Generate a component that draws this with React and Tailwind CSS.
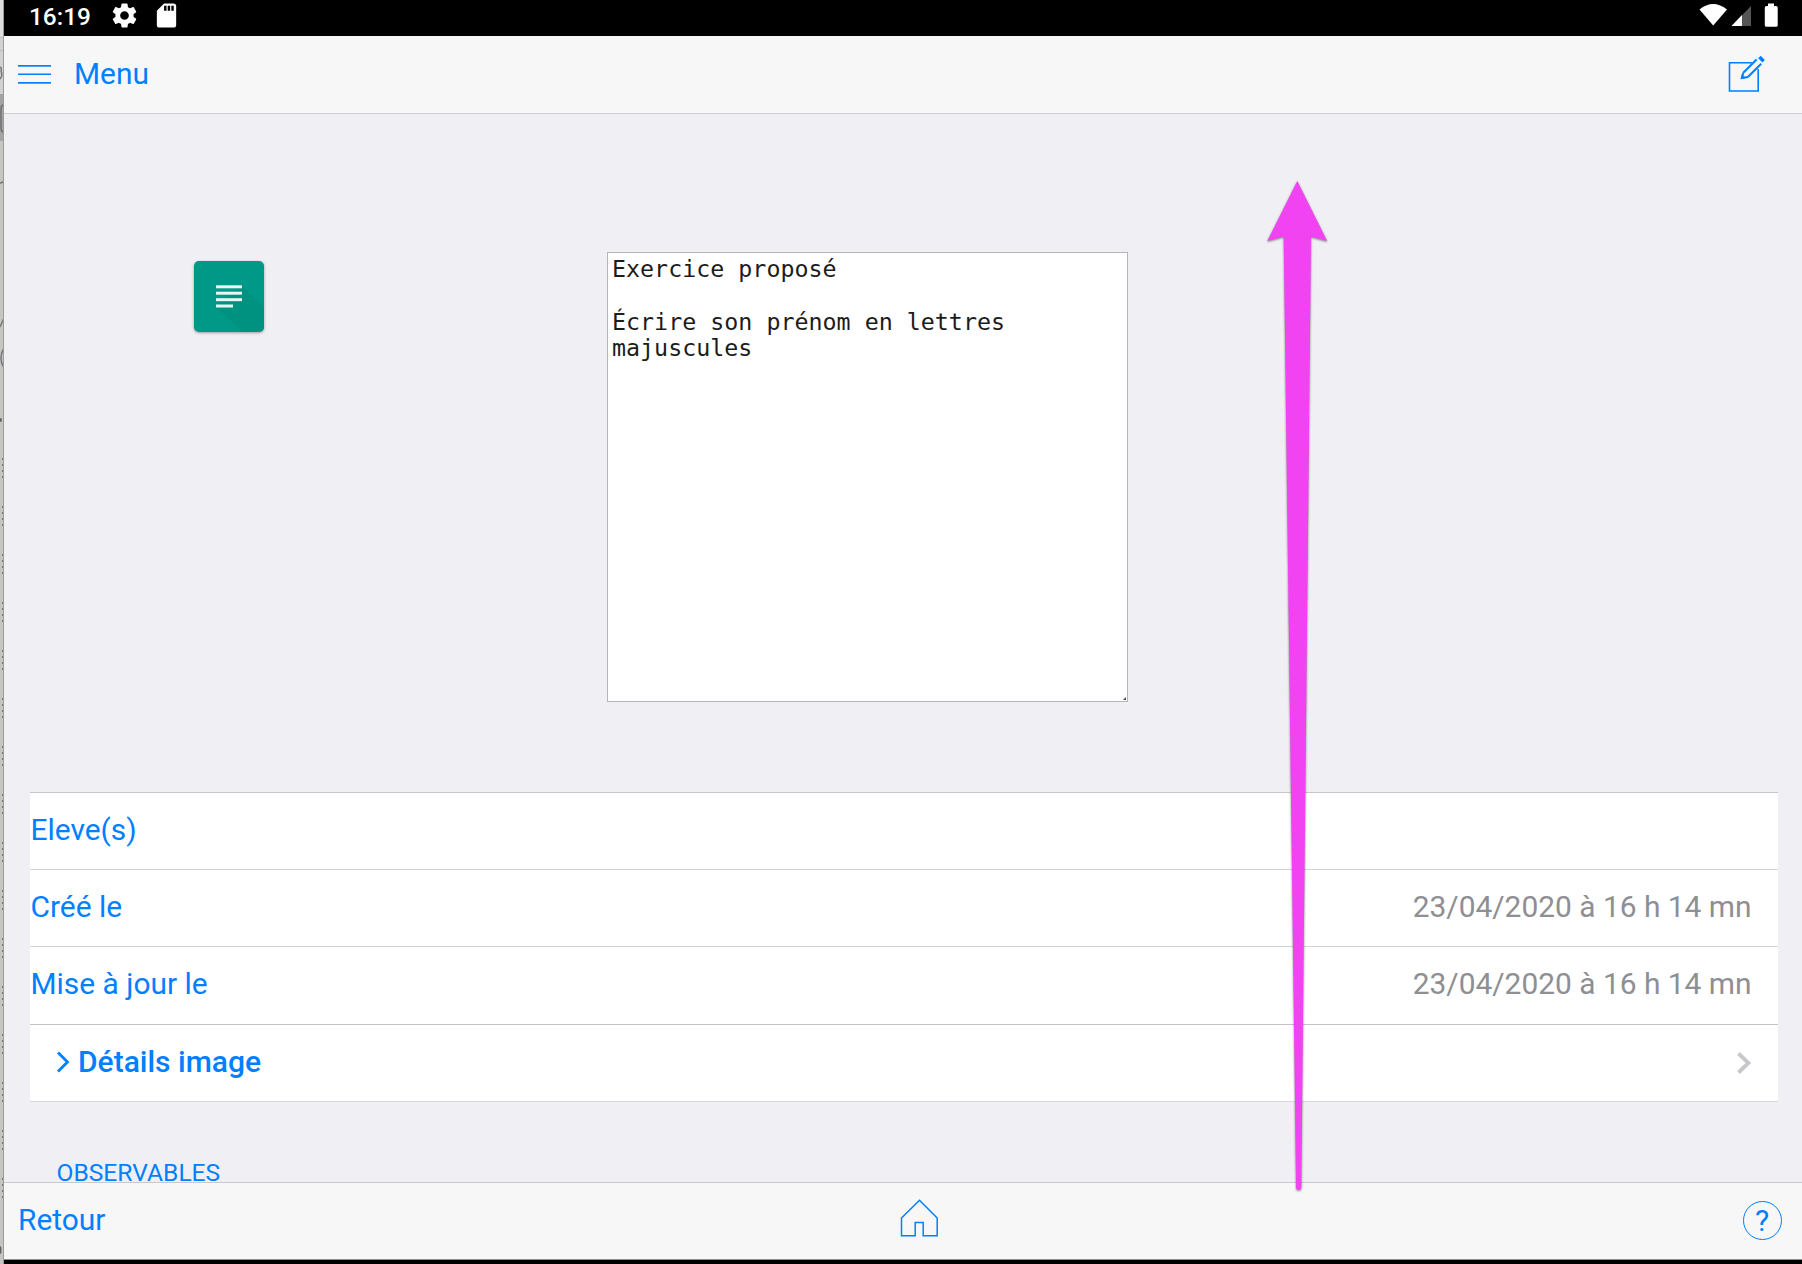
import React from "react";

function SideStrip() {
  const groups = Array.from({ length: 16 });
  return (
    <div className="relative h-full w-1 shrink-0 overflow-hidden border-r border-[#9c9c9c] bg-[#c6c5c1]">
      <svg className="absolute left-0 top-0" width="4" height="1264" viewBox="0 0 4 1264">
        <rect width="4" height="37" fill="#dedede" />
        <rect y="37" width="4" height="57" fill="#d2d2d2" />
        <rect y="37" width="4" height="1" fill="#bdbdbd" />
        <rect y="50" width="4" height="1" fill="#bdbdbd" />
        <path d="M0 67q2 1 1 4q2 5-1 8" fill="none" stroke="#777" strokeWidth="1.5" />
        <rect y="94" width="4" height="47" fill="#a5a4a2" />
        <path d="M4 105q-3 0-3 4v19q0 4 3 4" fill="none" stroke="#707070" strokeWidth="1.5" />
        <path d="M0 183q3 0 4-3M0 327l4-9M4 348q-6 10 0 20" fill="none" stroke="#777" strokeWidth="1.5" />
        <circle cx="0" cy="420" r="2" fill="#666" />
        <ellipse cx="0" cy="1250" rx="1.5" ry="4" fill="#666" />
        {groups.map((_, i) =>
          [0, 6, 12, 18].map((d) => (
            <rect key={i + "-" + d} x="2" y={458 + i * 48 + d} width="2" height="2" fill="#777" />
          ))
        )}
      </svg>
    </div>
  );
}

function StatusBar() {
  return (
    <div className="flex h-9 shrink-0 items-start bg-black">
      <span className="ml-[25px] mt-[2px] w-[62px] text-[24.4px] font-medium leading-[29px] text-white">16:19</span>
      <svg className="ml-[19px] mt-px" width="29" height="29" viewBox="0 0 24 24" fill="#fff">
        <path d="M19.43 12.98c.04-.32.07-.64.07-.98s-.03-.66-.07-.98l2.11-1.65c.19-.15.24-.42.12-.64l-2-3.46c-.12-.22-.39-.3-.61-.22l-2.49 1c-.52-.4-1.08-.73-1.69-.98l-.38-2.65C14.46 2.18 14.25 2 14 2h-4c-.25 0-.46.18-.49.42l-.38 2.65c-.61.25-1.17.59-1.69.98l-2.49-1c-.23-.09-.49 0-.61.22l-2 3.46c-.13.22-.07.49.12.64l2.11 1.65c-.04.32-.07.65-.07.98s.03.66.07.98l-2.11 1.65c-.19.15-.24.42-.12.64l2 3.46c.12.22.39.3.61.22l2.49-1c.52.4 1.08.73 1.69.98l.38 2.65c.03.24.24.42.49.42h4c.25 0 .46-.18.49-.42l.38-2.65c.61-.25 1.17-.59 1.69-.98l2.49 1c.23.09.49 0 .61-.22l2-3.46c.12-.22.07-.49-.12-.64l-2.11-1.65zM12 15.6a3.6 3.6 0 1 1 0-7.2 3.6 3.6 0 0 1 0 7.2z" />
      </svg>
      <svg className="ml-[13px] mt-px" width="29" height="29" viewBox="0 0 24 24" fill="#fff">
        <path d="M18 2h-8L4.02 8 4 20c0 1.1.9 2 2 2h12c1.1 0 2-.9 2-2V4c0-1.1-.9-2-2-2zm-6 6h-2V4h2v4zm3 0h-2V4h2v4zm3 0h-2V4h2v4z" />
      </svg>
      <svg className="ml-auto mr-[23px] mt-[3px]" width="80" height="24" viewBox="0 0 80 24" fill="#fff">
        <path d="M.5 6.5Q14-4.6 28 6.5L14.200 22.500z" />
        <path d="M52 3v20H32.500z" fill="#555" />
        <path d="M43 12v11H32.500z" />
        <path d="M69 .6h6V3h2q1.700 0 1.700 1.700v17.500q0 1.500-1.700 1.500H67.500q-1.700 0-1.700-1.500V4.700Q65.800 3 67.500 3H69z" />
      </svg>
    </div>
  );
}

function Header() {
  return (
    <header className="flex h-[77.500px] shrink-0 items-center border-b border-[#cfcfd1] bg-[#f7f7f7]">
      <svg className="ml-3.5" width="33" height="20" viewBox="0 0 33 20" fill="#007fff">
        <rect y="1" width="33" height="1.700" />
        <rect y="9.500" width="33" height="1.500" />
        <rect y="18" width="33" height="1.700" />
      </svg>
      <span className="ml-[23px] text-[29.9px] leading-9">Menu</span>
      <svg className="ml-auto mr-[36px]" width="38" height="38" viewBox="0 0 38 38" fill="none" stroke="#007fff" strokeWidth="1.600">
        <path d="M24 7.700H1.500V36H30.200V14" />
        <path d="M15.300 17.800L28.600 4.500M33.200 8.700L19.900 22M15.300 17.800L13.800 23L19.900 22" strokeWidth="2" />
        <path d="M13.900 19l4 4-5 1.200z" fill="#007fff" stroke="none" />
        <path d="M30.200 3.300L32.700.8l4.200 4.200-2.500 2.500z" fill="#007fff" stroke="none" />
      </svg>
    </header>
  );
}

function NoteIcon() {
  return (
    <div className="ml-[189.5px] mt-[147.500px] h-[70.500px] w-[70.500px] shrink-0 overflow-hidden rounded-[5px] bg-[#009886] shadow-[0_1px_3px_rgba(0,0,0,0.35)]">
      <svg width="71" height="71" viewBox="0 0 71 71">
        <path d="M48 25L71 47.500V71H49L22 46.500z" fill="#009280" />
        <g fill="#e4f7f2">
          <rect x="22" y="24.300" width="26" height="3" />
          <rect x="22" y="30.700" width="26" height="3" />
          <rect x="22" y="37.200" width="26" height="3" />
          <rect x="22" y="43.500" width="17" height="3" />
        </g>
      </svg>
    </div>
  );
}

function Row({ label, value, last }) {
  return (
    <div className={"flex h-[77.2px] items-center justify-between border-b pb-[3px] pr-[26.500px] " + (last ? "border-[#c2c2c8]" : "border-[#d3d3d6]")}>
      <span className="pl-[0.5px] text-[29.9px] leading-9">{label}</span>
      <span className="text-[29.9px] leading-9 text-[#8e8e93]">{value}</span>
    </div>
  );
}

function Arrow() {
  return (
    <svg className="pointer-events-none absolute left-[1260px] top-[176px] drop-shadow-[0_1px_1px_rgba(0,0,0,0.5)]" width="76" height="1022" viewBox="0 0 76 1022">
      <path d="M37.300 5L67.200 65L51 60.500L41.300 1012Q41.100 1014 38.700 1014Q36.300 1014 36.100 1012L23.700 60.500L7.300 65z" fill="#f243f2" />
    </svg>
  );
}

export default function App() {
  return (
    <div className="relative flex h-[1264px] w-[1802px] overflow-hidden bg-[#efeff4] font-['Roboto',sans-serif] text-[#007fff]">
      <SideStrip />
      <div className="flex min-w-0 flex-1 flex-col">
        <StatusBar />
        <Header />
        <main className="h-[1068.500px] shrink-0 overflow-hidden">
          <div className="flex h-[678.500px] items-start">
            <NoteIcon />
            <div className="relative ml-[342.500px] mt-[138.500px]">
              <textarea
                readOnly
                className="block h-[449.500px] w-[521px] resize-none overflow-hidden border border-[#b5b5b8] bg-white py-[3px] pl-[4.500px] pr-1 font-['DejaVu_Sans_Mono',monospace] text-[23.32px] leading-[26.3px] text-[#1c1c1c] outline-none"
                value={"Exercice proposé\n\nÉcrire son prénom en lettres majuscules"}
              />
              <svg className="absolute bottom-[2px] right-[2px]" width="3" height="3" viewBox="0 0 3 3">
                <path d="M3 0v3H0z" fill="#444" />
              </svg>
            </div>
          </div>
          <section className="ml-[26px] mr-6 border-t border-[#c8c7cc] bg-white">
            <Row label="Eleve(s)" />
            <Row label="Créé le" value="23/04/2020 à 16 h 14 mn" />
            <Row label="Mise à jour le" value="23/04/2020 à 16 h 14 mn" last />
            <div className="flex h-[77.2px] items-center border-b border-[#d8d8dd] pl-[26px] pr-[27px]">
              <svg className="-mt-px" width="14" height="22" viewBox="0 0 14 22" fill="none" stroke="#007fff" strokeWidth="2.800">
                <path d="M2 1.500L11.500 11L2 20.500" />
              </svg>
              <span className="-mt-px ml-2 text-[30px] font-medium leading-9">Détails image</span>
              <svg className="ml-auto mt-px" width="14" height="22" viewBox="0 0 14 22" fill="none" stroke="#c7c7cc" strokeWidth="3.800">
                <path d="M1.500 1.500L11.500 11L1.500 20.500" />
              </svg>
            </div>
          </section>
          <h2 className="ml-[52.500px] mt-[58.500px] whitespace-nowrap text-[24.6px] leading-[26px]">OBSERVABLES</h2>
        </main>
        <footer className="flex h-[78px] shrink-0 items-center border-b border-t border-b-[#8f8f8f] border-t-[#c9c9cb] bg-[#f7f7f7] pb-[3px]">
          <div className="w-[881px] pl-3.5 text-[29.9px] leading-9">Retour</div>
          <svg className="-mt-[3px] ml-[15px]" width="38" height="38" viewBox="0 0 38 38" fill="none" stroke="#007fff" strokeWidth="1.500">
            <path d="M19.500 1.200L37.200 19V36.700H23.200V23.500H15.200V36.700H1.500V19z" />
          </svg>
          <div className="flex flex-1 justify-end pr-[20.500px]">
            <div className="mt-0.5 flex h-[39px] w-[39px] items-center justify-center rounded-full border-[1.700px] border-[#007fff] text-[30px] leading-9">?</div>
          </div>
        </footer>
        <div className="flex-1 bg-black" />
      </div>
      <Arrow />
    </div>
  );
}
